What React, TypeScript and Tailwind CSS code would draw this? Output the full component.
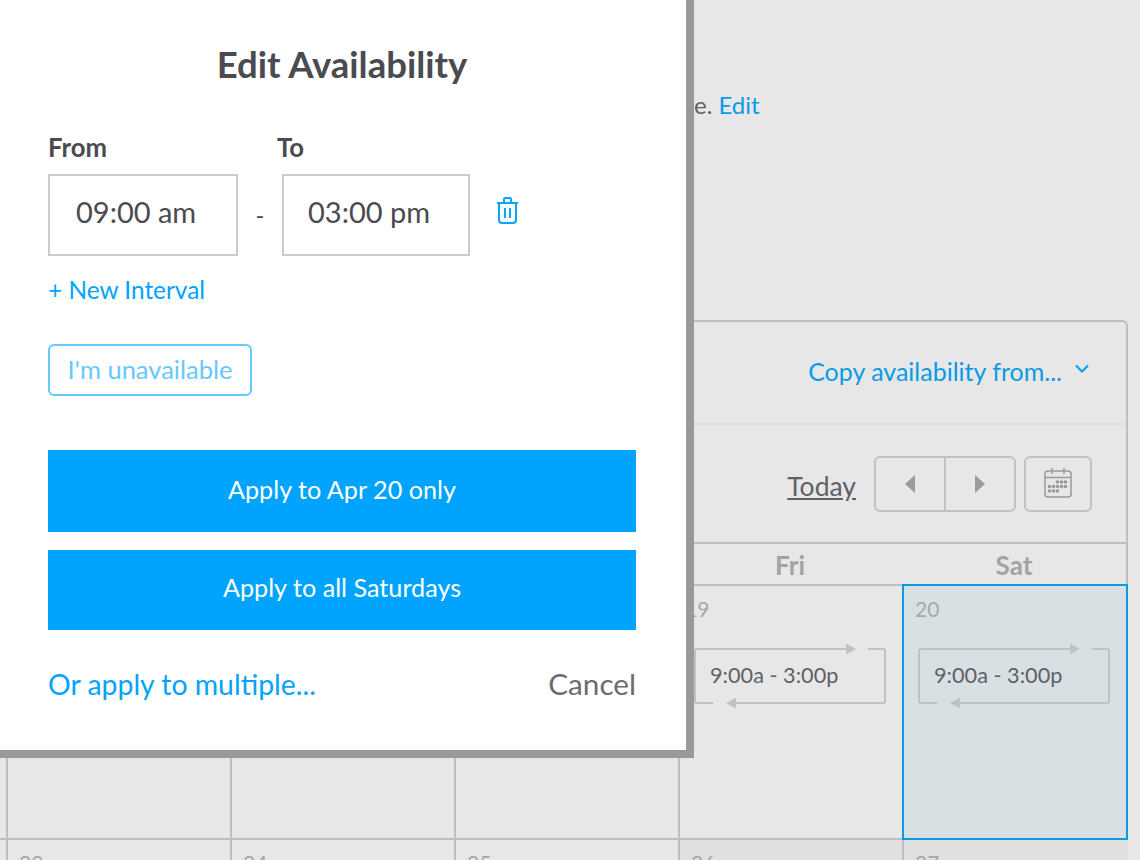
import React from "react";

const font = { fontFamily: '"Lato", "Open Sans", sans-serif' };

function EventBox() {
  return (
    <div className="relative mt-[26px] ml-[14px] flex h-[56px] w-[192px] items-center pb-[2px] pl-[16px] text-[21.7px] text-[#5f6167]">
      <svg className="absolute left-0 top-0 overflow-visible" width="192" height="56" viewBox="0 0 192 56" fill="none">
        <path d="M1 53V3a2 2 0 0 1 2-2h149M174 1h15a2 2 0 0 1 2 2v50a2 2 0 0 1-2 2h-147M19 55H3a2 2 0 0 1-2-2" stroke="#c2c2c2" strokeWidth="2" />
        <path d="M152 -4.5L162 1L152 6.5z" fill="#c2c2c2" />
        <path d="M42 49.5L32 55L42 60.5z" fill="#c2c2c2" />
      </svg>
      <span className="relative">9:00a - 3:00p</span>
    </div>
  );
}

function DayCell({ n, event, selected, dark }: { n?: number; event?: boolean; selected?: boolean; dark?: boolean }) {
  return (
    <div
      className={
        selected
          ? "relative z-10 -mr-[2px] mt-[-2px] h-[256px] border-2 border-[#0a9be8] bg-[#d8e0e4]"
          : dark
          ? "-mr-[2px] h-full border-l-2 border-[#bfbfbf] bg-[#e0e0e0]"
          : "-mr-[2px] h-full border-l-2 border-[#bfbfbf]"
      }
    >
      <div className={(n === 19 ? "pl-[5px]" : "pl-[11px]") + " h-[36px] pt-[10px] text-[21px] leading-[26px] text-[#a8a8a8]"}>{n}</div>
      {event && <EventBox />}
    </div>
  );
}

const calendarDots: [number, number][] = [
  [13.5, 14], [17.5, 14], [21.5, 14],
  [5.5, 18.5], [9.5, 18.5], [13.5, 18.5], [17.5, 18.5], [21.5, 18.5],
  [5.5, 23], [9.5, 23], [13.5, 23],
];

export default function App() {
  const week1: (number | undefined)[] = [undefined, undefined, undefined, undefined, undefined, 19, 20];
  const week2: (number | undefined)[] = [undefined, undefined, 23, 24, 25, 26, 27];
  return (
    <div style={font} className="relative h-[860px] w-[1140px] overflow-hidden bg-[#e7e7e7]">
      {/* page behind the dialog */}
      <div className="h-[320px] pt-[89px] pl-[694px] text-[24px] leading-[32px] text-[#5f6167]">
        e. <span className="text-[#0a9be8]">Edit</span>
      </div>
      <div className="flex justify-end pr-[12px]">
        <div className="h-[600px] w-[1572px] shrink-0 rounded-t-[6px] border-x-2 border-t-2 border-[#bfbfbf]">
          <div className="flex h-[104px] items-center justify-end border-b-4 border-[#dde4e6] pr-[36px]">
            <span className="text-[25px] text-[#0a9be8]">Copy availability from...</span>
            <svg className="ml-[12px] mb-[6px]" width="16" height="10" viewBox="0 0 16 10" fill="none">
              <path d="M2 1.5L8 7.5l6-6" stroke="#0a9be8" strokeWidth="2" />
            </svg>
          </div>
          <div className="flex h-[118px] items-start justify-end border-b-2 border-[#bfbfbf] pr-[34px] pt-[30px]">
            <span className="mr-[18px] mt-[12px] text-[26.5px] leading-[36px] text-[#5f6167] underline">Today</span>
            <div className="flex h-[56px] w-[142px] rounded-[6px] border-2 border-[#c2c2c2]">
              <div className="flex flex-1 items-center justify-center border-r-2 border-[#c2c2c2]">
                <svg width="12" height="18" viewBox="0 0 12 18"><path d="M11 0v18L1 9z" fill="#9b9b9b" /></svg>
              </div>
              <div className="flex flex-1 items-center justify-center">
                <svg width="12" height="18" viewBox="0 0 12 18"><path d="M1 0v18l10-9z" fill="#9b9b9b" /></svg>
              </div>
            </div>
            <div className="ml-[8px] flex h-[56px] w-[68px] items-center justify-center rounded-[6px] border-2 border-[#c2c2c2] pb-[3px]">
              <svg width="28" height="30" viewBox="0 0 28 30" fill="none">
                <rect x="1" y="3" width="26" height="26" rx="3" stroke="#9a9a9a" strokeWidth="1.5" />
                <path d="M1 9.5h26M8 0v6M20 0v6" stroke="#9a9a9a" strokeWidth="1.5" />
                <g fill="#9a9a9a">
                  {calendarDots.map(([cx, cy]) => (
                    <circle key={`${cx}-${cy}`} cx={cx} cy={cy} r="1.8" />
                  ))}
                </g>
              </svg>
            </div>
          </div>
          <div className="grid h-[42px] grid-cols-[repeat(7,224px)] border-b-2 border-[#bfbfbf] text-center text-[26px] font-bold leading-[42px] text-[#a3a3a3]">
            {["", "", "", "", "", "Fri", "Sat"].map((d, i) => (
              <div key={i}>{d}</div>
            ))}
          </div>
          <div className="grid h-[252px] grid-cols-[repeat(7,224px)]">
            {week1.map((n, i) => (
              <DayCell key={i} n={n} event={i >= 5} selected={i === 6} />
            ))}
          </div>
          <div className="grid h-[40px] grid-cols-[repeat(7,224px)] border-t-2 border-[#bfbfbf]">
            {week2.map((n, i) => (
              <DayCell key={i} n={n} dark={i >= 5} />
            ))}
          </div>
        </div>
      </div>

      {/* dialog */}
      <div className="absolute left-0 top-0 flex h-[758px] w-[694px] flex-col border-b-8 border-r-8 border-[#999999] bg-white pl-[48px] pr-[50px] text-[#4a4b50]">
        <h1 className="mt-[42px] text-center text-[36.5px] font-bold leading-[44px]">Edit Availability</h1>
        <div className="mb-[5px] mt-[39px] flex text-[25.7px] font-bold leading-[44px]">
          <span className="w-[229px]">From</span>
          <span>To</span>
        </div>
        <div className="flex items-center text-[29px]">
          <div className="flex h-[82px] w-[190px] items-center border-2 border-[#cccccc] pb-[6px] pl-[26px]">09:00 am</div>
          <span className="w-[44px] text-center text-[24px]">-</span>
          <div className="flex h-[82px] w-[188px] items-center border-2 border-[#cccccc] pb-[6px] pl-[24px]">03:00 pm</div>
          <svg className="mb-[10px] ml-[26px]" width="23" height="27" viewBox="0 0 23 27" fill="none" stroke="#0aa5ff" strokeWidth="2">
            <path d="M1 6h21M8 5V2a1 1 0 0 1 1-1h5a1 1 0 0 1 1 1v3M3 6v17a3 3 0 0 0 3 3h11a3 3 0 0 0 3-3V6M9 11v10M14 11v10" />
          </svg>
        </div>
        <div className="mt-[15px] text-[24.4px] leading-[38px] text-[#00a4ff]">+ New Interval</div>
        <div className="mt-[35px] flex h-[52px] w-[204px] items-center justify-center rounded-[6px] border-2 border-[#66c8ff] pb-[2px] text-[25.5px] text-[#66c8ff]">I'm unavailable</div>
        <div className="mt-[54px] flex h-[82px] items-center justify-center bg-[#00a4ff] pb-[2px] text-[25.2px] text-white">Apply to Apr 20 only</div>
        <div className="mt-[18px] flex h-[80px] items-center justify-center bg-[#00a4ff] pb-[4px] text-[25.2px] text-white">Apply to all Saturdays</div>
        <div className="mt-[34px] flex items-center justify-between leading-[40px]">
          <span className="text-[28.4px] text-[#00a4ff]">Or apply to multiple...</span>
          <span className="text-[29.7px] text-[#6a6c72]">Cancel</span>
        </div>
      </div>
    </div>
  );
}
